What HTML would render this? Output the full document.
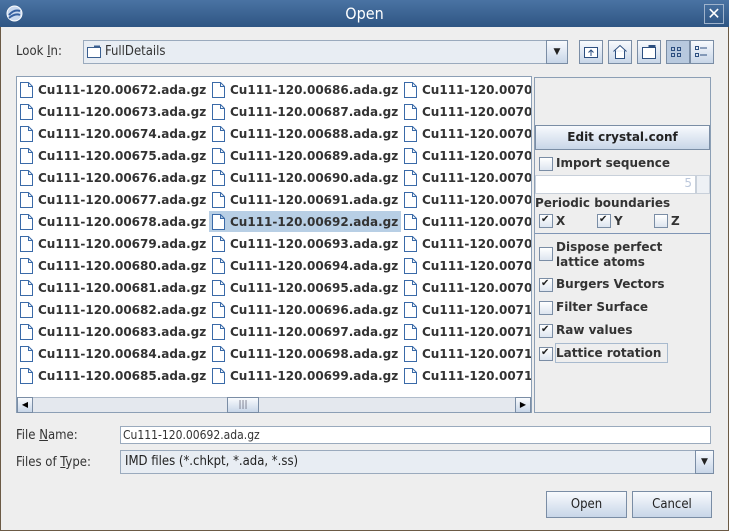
<!DOCTYPE html>
<html><head><style>
*{margin:0;padding:0;box-sizing:border-box}
body{width:729px;height:531px;overflow:hidden;background:#6b5a45;font-family:"DejaVu Sans","Liberation Sans",sans-serif;position:relative}
.a{position:absolute}
#win{left:1px;top:0;width:727px;height:530px;background:#eeeeee}
#title{left:0;top:0;width:729px;height:27px;background:linear-gradient(#4a73a3,#2f5583);color:#fff;font-size:16px;text-align:center;line-height:27px;font-family:"DejaVu Sans Condensed","DejaVu Sans",sans-serif}
.lbl{font-size:13px;color:#333;font-family:"DejaVu Sans Condensed","DejaVu Sans",sans-serif}
.btn{border:1px solid #7a8da5;background:linear-gradient(#f8fafd,#c8d6e8);}
.row{position:absolute;height:22px;font-size:12px;font-weight:bold;color:#333;white-space:nowrap;line-height:22px}
.ic{position:absolute;top:3px;width:13px;height:16px}
.cb{position:absolute;width:14px;height:14px;border:1px solid #7a8da5;background:linear-gradient(#fff,#dde5ef)}
.ck{position:absolute;font-size:10px;left:1px;top:-1px;color:#222;font-weight:bold}
.opt{position:absolute;font-size:12px;font-weight:bold;color:#333;white-space:nowrap}
.cond{font-family:"DejaVu Sans Condensed","DejaVu Sans",sans-serif}
</style></head><body>
<div id="win" class="a"></div>
<div id="title" class="a">Open</div>
<svg class="a" style="left:6px;top:5px" width="17" height="17"><circle cx="8.5" cy="8.5" r="7.5" fill="#c8d8ee" stroke="#fff"/><path d="M3 10 Q8 4 14 6 M3 13 Q9 8 14 10" stroke="#3560a0" stroke-width="2" fill="none"/></svg>
<div class="a" style="left:704px;top:4px;width:20px;height:20px;border:1px solid #9fb3cc;color:#fff;font-size:16px;text-align:center;line-height:18px">✕</div>

<div class="a lbl" style="left:16px;top:44px">Look <u>I</u>n:</div>
<div class="a" style="left:83px;top:40px;width:464px;height:24px;border:1px solid #9aaabd;background:#e8edf3"></div>
<svg class="a" style="left:87px;top:45px" width="14" height="13"><rect x="0.5" y="2.5" width="13" height="10" fill="#fff" stroke="#3a5f90"/><rect x="7" y="0.5" width="6" height="2" fill="#3a5f90"/></svg>
<div class="a cond" style="left:105px;top:44px;font-size:13px;color:#333">FullDetails</div>
<div class="a btn" style="left:546px;top:40px;width:22px;height:24px;font-size:9px;text-align:center;line-height:22px;color:#222">▼</div>
<div class="a btn" style="left:579px;top:40px;width:24px;height:24px"></div>
<div class="a btn" style="left:608px;top:40px;width:24px;height:24px"></div>
<div class="a btn" style="left:637px;top:40px;width:24px;height:24px"></div>
<div class="a" style="left:666px;top:40px;width:24px;height:24px;border:1px solid #7a8da5;background:#b8c9de"></div>
<div class="a btn" style="left:690px;top:40px;width:24px;height:24px"></div>
<svg class="a" style="left:579px;top:40px" width="136" height="24" fill="none" stroke="#2d4f80">
<rect x="5.5" y="7.5" width="13" height="10" fill="#fff"/><path d="M12 16V10M9.5 12.5L12 10L14.5 12.5"/>
<path d="M34.5 11.5L41 5.5L47.5 11.5M36.5 10.5V18.5H45.5V10.5" fill="#fff"/>
<rect x="63.5" y="7.5" width="13" height="11" fill="#fff"/><rect x="70" y="5.5" width="6" height="2" fill="#2d4f80"/>
<path d="M92.5 7.5h3v3h-3zM98.5 7.5h3v3h-3zM92.5 13.5h3v3h-3zM98.5 13.5h3v3h-3z"/>
<path d="M116.5 6.5h3v3h-3zM116.5 13.5h3v3h-3zM121 8h7M121 15h7"/>
</svg>

<div class="a" style="left:16px;top:76px;width:516px;height:337px;border:1px solid #8c9fb5;background:#fff"></div>
<div class="a" style="left:209px;top:211px;width:192px;height:21px;background:#b8cfe5"></div>
<div class="a" style="left:17px;top:397px;width:514px;height:15px;background:#e4e8ee;border-top:1px solid #b0bccb"></div>
<div class="a btn" style="left:17px;top:397px;width:16px;height:16px;font-size:8px;line-height:14px;text-align:center">◀</div>
<div class="a btn" style="left:515px;top:397px;width:16px;height:16px;font-size:8px;line-height:14px;text-align:center">▶</div>
<div class="a btn" style="left:227px;top:397px;width:32px;height:16px;font-size:9px;line-height:14px;text-align:center;color:#667">|||</div>

<div class="a" style="left:534px;top:77px;width:177px;height:336px;border:1px solid #8c9fb5;background:#eeeeee"></div>
<div class="a btn" style="left:535px;top:125px;width:175px;height:25px;font-size:12px;font-weight:bold;text-align:center;line-height:23px;color:#222">Edit crystal.conf</div>
<div class="cb" style="left:539px;top:157px"></div><div class="opt" style="left:556px;top:156px">Import sequence</div>
<div class="a" style="left:535px;top:175px;width:161px;height:19px;background:#fff;border:1px solid #c8d0da;font-size:12px;color:#bcc8dc;text-align:right;padding-right:3px">5</div>
<div class="a" style="left:696px;top:175px;width:14px;height:19px;border:1px solid #c8d0da;background:#eef1f5"></div>
<div class="opt" style="left:535px;top:196px">Periodic boundaries</div>
<div class="cb" style="left:539px;top:214px"><span class="ck">✔</span></div><div class="opt" style="left:556px;top:214px">X</div>
<div class="cb" style="left:597px;top:214px"><span class="ck">✔</span></div><div class="opt" style="left:614px;top:214px">Y</div>
<div class="cb" style="left:654px;top:214px"></div><div class="opt" style="left:671px;top:214px">Z</div>
<div class="a" style="left:535px;top:233px;width:175px;height:1px;background:#7f95b5"></div>
<div class="cb" style="left:539px;top:247px"></div><div class="opt" style="left:556px;top:240px;line-height:15px">Dispose perfect<br>lattice atoms</div>
<div class="cb" style="left:539px;top:278px"><span class="ck">✔</span></div><div class="opt" style="left:556px;top:277px">Burgers Vectors</div>
<div class="cb" style="left:539px;top:301px"></div><div class="opt" style="left:556px;top:300px">Filter Surface</div>
<div class="cb" style="left:539px;top:324px"><span class="ck">✔</span></div><div class="opt" style="left:556px;top:323px">Raw values</div>
<div class="cb" style="left:539px;top:347px"><span class="ck">✔</span></div><div class="a" style="left:555px;top:343px;width:113px;height:20px;border:1px solid #a8bace"></div><div class="opt" style="left:556px;top:346px">Lattice rotation</div>

<div class="a lbl" style="left:16px;top:428px">File <u>N</u>ame:</div>
<div class="a cond" style="left:120px;top:426px;width:591px;height:18px;border:1px solid #9aaabd;background:#fff;font-size:12px;color:#333;padding-left:2px;line-height:16px">Cu111-120.00692.ada.gz</div>
<div class="a lbl" style="left:16px;top:455px">Files of <u>T</u>ype:</div>
<div class="a cond" style="left:120px;top:450px;width:576px;height:24px;border:1px solid #9aaabd;background:#e8edf3;font-size:13px;color:#222;padding-left:4px;line-height:22px">IMD files (*.chkpt, *.ada, *.ss)</div>
<div class="a btn" style="left:695px;top:450px;width:19px;height:24px;font-size:9px;text-align:center;line-height:22px;color:#222">▼</div>
<div class="a btn cond" style="left:546px;top:491px;width:81px;height:27px;font-size:13px;text-align:center;line-height:25px;color:#222">Open</div>
<div class="a btn cond" style="left:632px;top:491px;width:80px;height:27px;font-size:13px;text-align:center;line-height:25px;color:#222">Cancel</div>

<svg width="0" height="0" style="position:absolute"><defs><symbol id="f" viewBox="0 0 13 16"><path d="M0.5 0.5H8.5L12.5 4.5V15.5H0.5Z M8.5 0.5V4.5H12.5" fill="#fff" stroke="#3a6aa8"/></symbol></defs></svg>

<div class="a" style="left:17px;top:79px;width:514px;height:318px;overflow:hidden">
<div class="row" style="left:0;top:0"><svg class="ic" style="left:3px"><use href="#f"/></svg><span style="position:absolute;left:21px">Cu111-120.00672.ada.gz</span><svg class="ic" style="left:195px"><use href="#f"/></svg><span style="position:absolute;left:213px">Cu111-120.00686.ada.gz</span><svg class="ic" style="left:387px"><use href="#f"/></svg><span style="position:absolute;left:405px">Cu111-120.00700.ada.gz</span></div>
<div class="row" style="left:0;top:22px"><svg class="ic" style="left:3px"><use href="#f"/></svg><span style="position:absolute;left:21px">Cu111-120.00673.ada.gz</span><svg class="ic" style="left:195px"><use href="#f"/></svg><span style="position:absolute;left:213px">Cu111-120.00687.ada.gz</span><svg class="ic" style="left:387px"><use href="#f"/></svg><span style="position:absolute;left:405px">Cu111-120.00701.ada.gz</span></div>
<div class="row" style="left:0;top:44px"><svg class="ic" style="left:3px"><use href="#f"/></svg><span style="position:absolute;left:21px">Cu111-120.00674.ada.gz</span><svg class="ic" style="left:195px"><use href="#f"/></svg><span style="position:absolute;left:213px">Cu111-120.00688.ada.gz</span><svg class="ic" style="left:387px"><use href="#f"/></svg><span style="position:absolute;left:405px">Cu111-120.00702.ada.gz</span></div>
<div class="row" style="left:0;top:66px"><svg class="ic" style="left:3px"><use href="#f"/></svg><span style="position:absolute;left:21px">Cu111-120.00675.ada.gz</span><svg class="ic" style="left:195px"><use href="#f"/></svg><span style="position:absolute;left:213px">Cu111-120.00689.ada.gz</span><svg class="ic" style="left:387px"><use href="#f"/></svg><span style="position:absolute;left:405px">Cu111-120.00703.ada.gz</span></div>
<div class="row" style="left:0;top:88px"><svg class="ic" style="left:3px"><use href="#f"/></svg><span style="position:absolute;left:21px">Cu111-120.00676.ada.gz</span><svg class="ic" style="left:195px"><use href="#f"/></svg><span style="position:absolute;left:213px">Cu111-120.00690.ada.gz</span><svg class="ic" style="left:387px"><use href="#f"/></svg><span style="position:absolute;left:405px">Cu111-120.00704.ada.gz</span></div>
<div class="row" style="left:0;top:110px"><svg class="ic" style="left:3px"><use href="#f"/></svg><span style="position:absolute;left:21px">Cu111-120.00677.ada.gz</span><svg class="ic" style="left:195px"><use href="#f"/></svg><span style="position:absolute;left:213px">Cu111-120.00691.ada.gz</span><svg class="ic" style="left:387px"><use href="#f"/></svg><span style="position:absolute;left:405px">Cu111-120.00705.ada.gz</span></div>
<div class="row" style="left:0;top:132px"><svg class="ic" style="left:3px"><use href="#f"/></svg><span style="position:absolute;left:21px">Cu111-120.00678.ada.gz</span><svg class="ic" style="left:195px"><use href="#f"/></svg><span style="position:absolute;left:213px">Cu111-120.00692.ada.gz</span><svg class="ic" style="left:387px"><use href="#f"/></svg><span style="position:absolute;left:405px">Cu111-120.00706.ada.gz</span></div>
<div class="row" style="left:0;top:154px"><svg class="ic" style="left:3px"><use href="#f"/></svg><span style="position:absolute;left:21px">Cu111-120.00679.ada.gz</span><svg class="ic" style="left:195px"><use href="#f"/></svg><span style="position:absolute;left:213px">Cu111-120.00693.ada.gz</span><svg class="ic" style="left:387px"><use href="#f"/></svg><span style="position:absolute;left:405px">Cu111-120.00707.ada.gz</span></div>
<div class="row" style="left:0;top:176px"><svg class="ic" style="left:3px"><use href="#f"/></svg><span style="position:absolute;left:21px">Cu111-120.00680.ada.gz</span><svg class="ic" style="left:195px"><use href="#f"/></svg><span style="position:absolute;left:213px">Cu111-120.00694.ada.gz</span><svg class="ic" style="left:387px"><use href="#f"/></svg><span style="position:absolute;left:405px">Cu111-120.00708.ada.gz</span></div>
<div class="row" style="left:0;top:198px"><svg class="ic" style="left:3px"><use href="#f"/></svg><span style="position:absolute;left:21px">Cu111-120.00681.ada.gz</span><svg class="ic" style="left:195px"><use href="#f"/></svg><span style="position:absolute;left:213px">Cu111-120.00695.ada.gz</span><svg class="ic" style="left:387px"><use href="#f"/></svg><span style="position:absolute;left:405px">Cu111-120.00709.ada.gz</span></div>
<div class="row" style="left:0;top:220px"><svg class="ic" style="left:3px"><use href="#f"/></svg><span style="position:absolute;left:21px">Cu111-120.00682.ada.gz</span><svg class="ic" style="left:195px"><use href="#f"/></svg><span style="position:absolute;left:213px">Cu111-120.00696.ada.gz</span><svg class="ic" style="left:387px"><use href="#f"/></svg><span style="position:absolute;left:405px">Cu111-120.00710.ada.gz</span></div>
<div class="row" style="left:0;top:242px"><svg class="ic" style="left:3px"><use href="#f"/></svg><span style="position:absolute;left:21px">Cu111-120.00683.ada.gz</span><svg class="ic" style="left:195px"><use href="#f"/></svg><span style="position:absolute;left:213px">Cu111-120.00697.ada.gz</span><svg class="ic" style="left:387px"><use href="#f"/></svg><span style="position:absolute;left:405px">Cu111-120.00711.ada.gz</span></div>
<div class="row" style="left:0;top:264px"><svg class="ic" style="left:3px"><use href="#f"/></svg><span style="position:absolute;left:21px">Cu111-120.00684.ada.gz</span><svg class="ic" style="left:195px"><use href="#f"/></svg><span style="position:absolute;left:213px">Cu111-120.00698.ada.gz</span><svg class="ic" style="left:387px"><use href="#f"/></svg><span style="position:absolute;left:405px">Cu111-120.00712.ada.gz</span></div>
<div class="row" style="left:0;top:286px"><svg class="ic" style="left:3px"><use href="#f"/></svg><span style="position:absolute;left:21px">Cu111-120.00685.ada.gz</span><svg class="ic" style="left:195px"><use href="#f"/></svg><span style="position:absolute;left:213px">Cu111-120.00699.ada.gz</span><svg class="ic" style="left:387px"><use href="#f"/></svg><span style="position:absolute;left:405px">Cu111-120.00713.ada.gz</span></div>
</div>
</body></html>
